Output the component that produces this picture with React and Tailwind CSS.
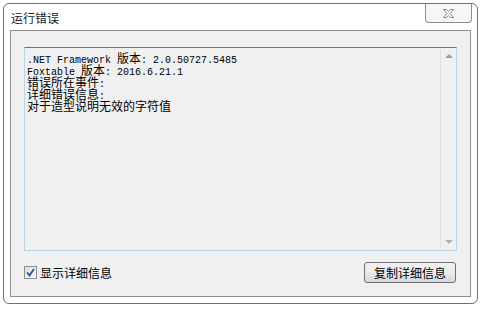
function Line({ parts }) {
  return (
    <div className="h-[12px] leading-[12px] whitespace-pre">
      {parts.map((p, i) =>
        p.m ? (
          <span key={i} className="text-[10px] font-['Liberation_Mono',monospace]">{p.t}</span>
        ) : (
          <span key={i} className="text-[12px]">{p.t}</span>
        )
      )}
    </div>
  );
}

function CloseIcon() {
  return (
    <svg width="13" height="11" viewBox="0 0 13 11">
      <path
        d="M1.5 1.5 H4.5 L6.5 3.5 L8.5 1.5 H11.5 L8 5.5 L11.5 9.5 H8.5 L6.5 7.5 L4.5 9.5 H1.5 L5 5.5 Z"
        fill="#fdfdfd"
        stroke="#8a8a8a"
        strokeWidth="1"
      />
    </svg>
  );
}

export default function App() {
  return (
    <div className="w-[481px] h-[325px] bg-white pt-[3px] pl-[3px] font-['Noto_Sans_CJK_SC',sans-serif] text-black">
      <div className="w-[475px] h-[301px] border border-[#707070] rounded-[6px] bg-white flex flex-col">
        {/* title bar */}
        <div className="h-[26px] flex items-start justify-between">
          <div className="pl-[7px] pt-[7px] text-[12px] leading-[14px] text-[#1e1e1e]">运行错误</div>
          <div className="mr-[5px] w-[47px] h-[19px] border border-t-0 border-[#8e8e8e] rounded-b-[4px] bg-[#f6f6f6] flex items-center justify-center">
            <CloseIcon />
          </div>
        </div>

        {/* client panel */}
        <div className="mx-[6px] h-[267px] border border-[#8f8f8f] bg-[#f0f0f0] flex flex-col pt-[16px] pl-[13px] pr-[13px]">
          <div className="h-[204px] border border-[#b9d5ea] border-t-[#3d82b8] flex">
            <div className="flex-1 pt-[2px] pl-[2px] text-black">
              <Line parts={[{ t: '.NET Framework ', m: 1 }, { t: '版本' }, { t: ': 2.0.50727.5485', m: 1 }]} />
              <Line parts={[{ t: 'Foxtable ', m: 1 }, { t: '版本' }, { t: ': 2016.6.21.1', m: 1 }]} />
              <Line parts={[{ t: '错误所在事件' }, { t: ':', m: 1 }]} />
              <Line parts={[{ t: '详细错误信息' }, { t: ':', m: 1 }]} />
              <Line parts={[{ t: '对于造型说明无效的字符值' }]} />
            </div>
            <div className="w-[16px] border-l border-[#e2e2e2] bg-[#f0f0f0] flex flex-col items-center justify-between py-[6px]">
              <div className="w-0 h-0 border-l-[4px] border-r-[4px] border-b-[4px] border-l-transparent border-r-transparent border-b-[#a0a0a0]" />
              <div className="w-0 h-0 border-l-[4px] border-r-[4px] border-t-[4px] border-l-transparent border-r-transparent border-t-[#b0b0b0]" />
            </div>
          </div>

          <div className="mt-[11px] flex items-center justify-between pr-px">
            <div className="flex items-center gap-[3px]">
              <div className="w-[13px] h-[13px] border border-[#8f8f8f] bg-gradient-to-br from-[#dcdcdc] to-[#f8f8f8] flex items-center justify-center">
                <svg width="9" height="9" viewBox="0 0 9 9">
                  <path d="M1 4.5 L3.5 7.5 L8 1" fill="none" stroke="#2a4fa0" strokeWidth="1.8" />
                </svg>
              </div>
              <span className="text-[12px] leading-[14px]">显示详细信息</span>
            </div>
            <div className="w-[92px] h-[21px] border border-[#707070] rounded-[3px] bg-gradient-to-b from-[#f2f2f2] via-[#ebebeb] to-[#d6d6d6] flex items-center justify-center text-[12px] leading-[14px]">
              复制详细信息
            </div>
          </div>
        </div>
      </div>
    </div>
  );
}
